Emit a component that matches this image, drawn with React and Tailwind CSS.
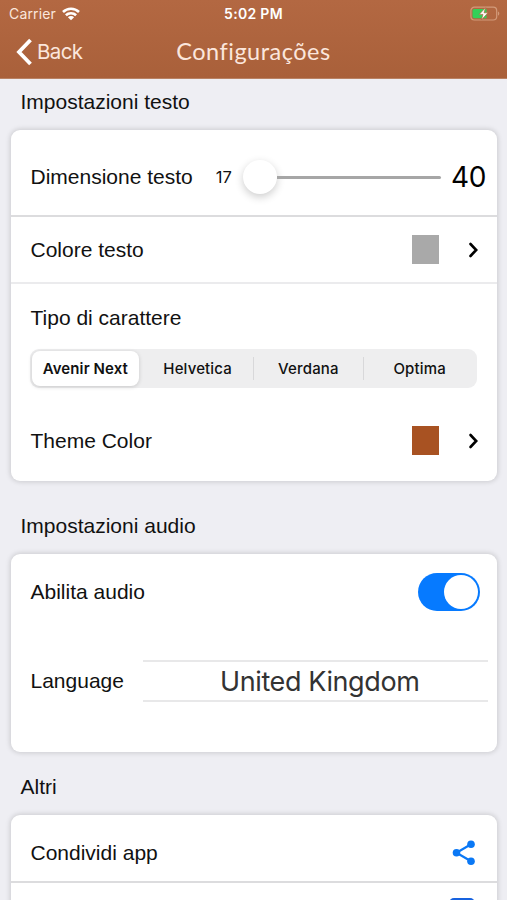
import React, { useState } from "react";

const FONTS = ["Avenir Next", "Helvetica", "Verdana", "Optima"];

const WifiIcon = () => (
    <svg width="18" height="14" viewBox="0 0 18 14" fill="none" stroke="#fff" strokeWidth="2.6">
        <path d="M1 5a11.5 11.5 0 0 1 16 0" />
        <path d="M3.9 8.3a7.3 7.3 0 0 1 10.2 0" />
        <path d="M9 13.3 5.9 10.3a4.4 4.4 0 0 1 6.2 0z" fill="#fff" stroke="none" />
    </svg>
);

const BatteryIcon = () => (
    <svg width="30" height="16" viewBox="0 0 30 16" fill="none">
        <rect x="0.9" y="1.2" width="25.8" height="12.8" rx="3.5" stroke="#d29a7a" strokeWidth="1.2" />
        <path d="M28 5.5c1.8.6 1.8 3.6 0 4.2z" fill="#d29a7a" />
        <path d="M4.2 3H16.5v9.2H4.2a1.7 1.7 0 0 1-1.7-1.7V4.7c0-.9.8-1.7 1.7-1.7z" fill="#33d058" />
        <path
            d="M15.6 1.6 9.2 8.4h3.8l-1.7 5.6 6.7-7.2h-4z"
            fill="#fff"
            stroke="#b0663f"
            strokeWidth="0.7"
        />
    </svg>
);

const ChevronRight = () => (
    <svg width="12" height="18" viewBox="0 0 12 18" fill="none" stroke="#000" strokeWidth="2.6">
        <path d="M2.5 3l5.7 6-5.7 6" strokeLinecap="round" strokeLinejoin="miter" />
    </svg>
);

const ShareIcon = () => (
    <svg width="24" height="26" viewBox="0 0 24 26" fill="#0a78f5">
        <path d="M19 4.3 4.5 12.8 19 21.3" fill="none" stroke="#0a78f5" strokeWidth="2.2" />
        <circle cx="19" cy="4.3" r="3.8" />
        <circle cx="4.5" cy="12.8" r="3.8" />
        <circle cx="19" cy="21.3" r="3.8" />
    </svg>
);

const SectionTitle = ({ children, className }) => (
    <h2 className={`px-[20.5px] text-[21px] leading-6 text-[#111] whitespace-nowrap ${className}`}>
        {children}
    </h2>
);

const Card = ({ children, className }) => (
    <section
        className={`ml-[11px] mr-[10px] bg-white rounded-[9px] shadow-[0_0_5px_1px_rgba(0,0,0,0.15)] ${className}`}
    >
        {children}
    </section>
);

// Label + color square + arrow
const ColorRow = ({ label, swatch, className }) => (
    <div className={`flex items-center pl-[19.5px] pr-[17px] ${className}`}>
        <span className="flex-1">{label}</span>
        <span className={`w-[27px] h-[29px] ${swatch}`}></span>
        <span className="ml-[29px]">
            <ChevronRight />
        </span>
    </div>
);

const Header = () => (
    <header className="h-[79px] shrink-0 bg-linear-to-b from-[#b36842] to-[#a9603a] border-b border-[#b98264] text-[#fbe6dc]">
        <div className="grid grid-cols-3 items-center h-[27px] pl-[9px] pr-[7px] font-['Inter',sans-serif] text-[14px]">
            <div className="flex items-center gap-[6px]">
                <span className="tracking-[0.15px]">Carrier</span>
                <WifiIcon />
            </div>
            <span className="pr-[2px] text-center font-semibold text-white tracking-[0.3px]">5:02 PM</span>
            <div className="flex justify-end">
                <BatteryIcon />
            </div>
        </div>
        <div className="grid grid-cols-[1fr_auto_1fr] items-center h-[50px]">
            <button className="flex items-center pl-4 text-left">
                <svg width="17" height="28" viewBox="0 0 17 28" fill="none" stroke="#fff" strokeWidth="3.8">
                    <path d="M14.5 2 3 14l11.5 12" />
                </svg>
                <span className="ml-1 font-['Inter',sans-serif] text-[20.5px] tracking-[-0.6px]">Back</span>
            </button>
            <h1 className="pb-[3px] font-['Lato',sans-serif] text-[23.5px] tracking-[0.5px]">Configurações</h1>
            <span></span>
        </div>
    </header>
);

const App = () => {
    const [font, setFont] = useState("Avenir Next");

    return (
        <div className="flex flex-col w-full h-[900px] overflow-hidden bg-[#eeeef3] font-['Liberation_Sans',sans-serif] text-[21px] leading-6 text-[#111]">
            <Header />

            <SectionTitle className="mt-[11px]">Impostazioni testo</SectionTitle>
            <Card className="mt-4 h-[351px] shrink-0">
                <div className="flex items-center h-[87px] pt-[10px] pb-[1px] pl-[19.5px] pr-[11px] border-b-2 border-[#dcdcde]">
                    <span className="whitespace-nowrap">Dimensione testo</span>
                    <span className="ml-[23px] w-[20px] font-['Inter',sans-serif] text-[16.5px] tracking-[0.1px]">17</span>
                    <div className="flex items-center ml-[7px] w-[198px]">
                        <span className="w-[34px] h-[34px] rounded-full bg-white shadow-[0_3px_9px_rgba(0,0,0,0.2)]"></span>
                        <span className="flex-1 h-[3px] rounded-r-full bg-[#a6a6a6]"></span>
                    </div>
                    <span className="ml-auto font-['Inter',sans-serif] text-[28px] tracking-[-0.4px] text-black">40</span>
                </div>
                <ColorRow label="Colore testo" swatch="bg-[#a9a9a9]" className="h-[67px] border-b-2 border-[#ebebed]" />
                <div className="pt-[22px] pl-[19px] pr-[20px]">
                    <p className="pl-[0.5px]">Tipo di carattere</p>
                    <div className="grid grid-cols-4 mt-[19px] p-[2px] h-[39px] rounded-[9px] bg-[#eeeeef] font-['Inter',sans-serif] text-[15px] font-medium tracking-[0.15px]">
                        {FONTS.map((name, i) => (
                            <button
                                key={name}
                                onClick={() => setFont(name)}
                                className={
                                    font === name
                                        ? "mr-1 rounded-[8px] bg-white font-semibold tracking-[0.1px] whitespace-nowrap shadow-[0_1px_4px_rgba(0,0,0,0.16)]"
                                        : "flex items-center"
                                }
                            >
                                {font === name ? (
                                    name
                                ) : (
                                    <>
                                        <span className="flex-1">{name}</span>
                                        {i < 3 && <span className="w-px h-[23px] bg-[#d8d8da]"></span>}
                                    </>
                                )}
                            </button>
                        ))}
                    </div>
                </div>
                <ColorRow label="Theme Color" swatch="bg-[#a85222]" className="mt-[19px] h-[67px]" />
            </Card>

            <SectionTitle className="mt-[33px]">Impostazioni audio</SectionTitle>
            <Card className="mt-4 h-[198px] shrink-0">
                <div className="flex items-center justify-between h-[75px] pl-[19.5px] pr-[17px]">
                    <span>Abilita audio</span>
                    <span className="flex justify-end items-center w-[62px] h-[38px] p-[2px] rounded-full bg-[#067aff]">
                        <span className="w-[34px] h-[34px] rounded-full bg-white"></span>
                    </span>
                </div>
                <div className="flex items-center mt-[31px] pl-[19.5px] pr-[9px]">
                    <span className="w-[112px]">Language</span>
                    <span className="flex-1 h-[42px] pl-[9px] border-y-2 border-[#e8e8e9] text-center leading-[40px] font-['Inter',sans-serif] text-[27px] tracking-[-0.4px] text-[#333]">
                        United Kingdom
                    </span>
                </div>
            </Card>

            <SectionTitle className="mt-[23px]">Altri</SectionTitle>
            <Card className="mt-4 h-[140px] shrink-0">
                <div className="flex items-center justify-between h-[68px] pt-[10px] pl-[19.5px] pr-[21px] border-b-2 border-[#dcdcde]">
                    <span>Condividi app</span>
                    <ShareIcon />
                </div>
                <div className="flex justify-end pt-[15px] pr-[22px]">
                    <span className="w-[26px] h-[26px] rounded-[5px] bg-[#1762df]"></span>
                </div>
            </Card>
        </div>
    );
};

export default App;
